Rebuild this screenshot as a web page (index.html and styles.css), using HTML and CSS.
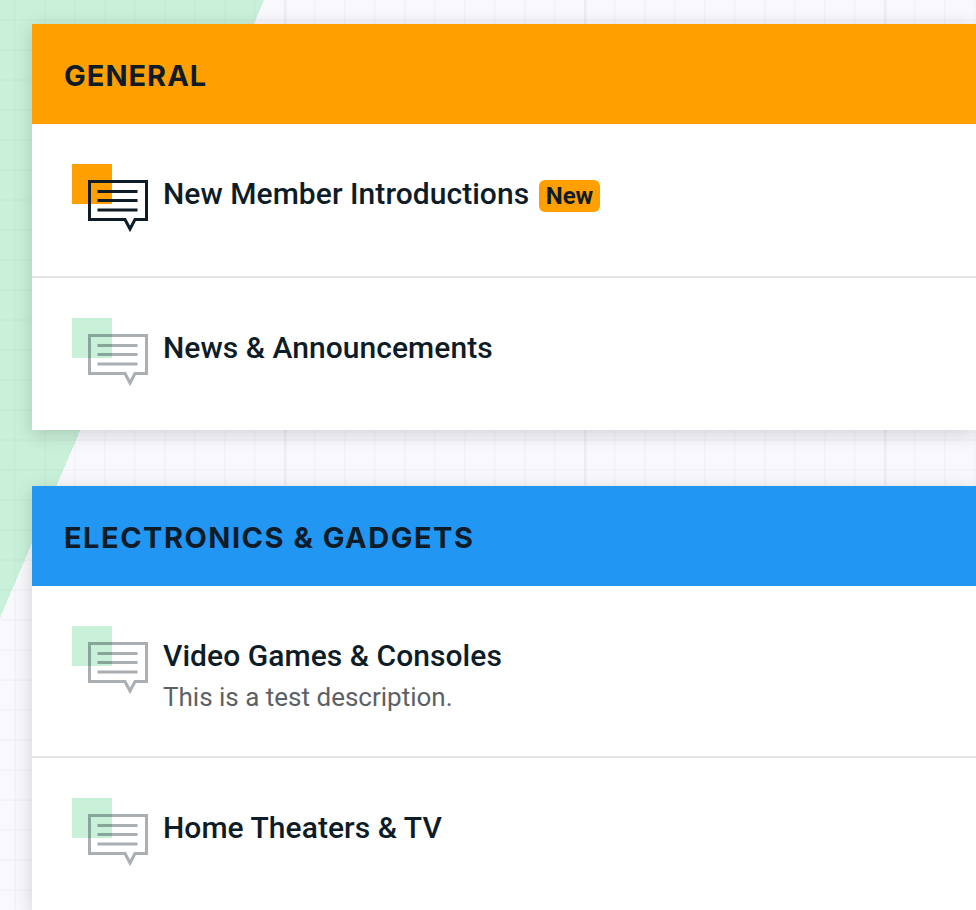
FILE: index.html
```html
<!DOCTYPE html>
<html lang="en">
<head>
    <meta charset="UTF-8">
    <meta name="viewport" content="width=device-width, initial-scale=1.0">
    <title>Forums</title>
    <link rel="stylesheet" href="styles.css">
</head>
<body>

    <svg class="sprite" width="0" height="0" aria-hidden="true">
        <symbol id="bubble" viewBox="0 0 60 52">
            <path d="M1.5 1.5H58.500V39.500H47L42 49 37 39.500H1.500Z" fill="none" stroke="currentColor" stroke-width="3"/>
            <path d="M9.500 11.500H49.500M9.500 20.500H49.500M9.500 30H49.500" fill="none" stroke="currentColor" stroke-width="3"/>
        </symbol>
    </svg>

    <div class="main">
        <section class="category">
            <h2 class="category-head general">GENERAL</h2>
            <div class="forum unread">
                <div class="forum-icon">
                    <span class="square"></span>
                    <svg class="bubble"><use href="#bubble"/></svg>
                </div>
                <div class="forum-text">
                    <h3>New Member Introductions <span class="badge">New</span></h3>
                </div>
            </div>
            <div class="forum">
                <div class="forum-icon">
                    <span class="square"></span>
                    <svg class="bubble"><use href="#bubble"/></svg>
                </div>
                <div class="forum-text">
                    <h3>News &amp; Announcements</h3>
                </div>
            </div>
        </section>

        <section class="category">
            <h2 class="category-head electronics">ELECTRONICS &amp; GADGETS</h2>
            <div class="forum">
                <div class="forum-icon">
                    <span class="square"></span>
                    <svg class="bubble"><use href="#bubble"/></svg>
                </div>
                <div class="forum-text">
                    <h3>Video Games &amp; Consoles</h3>
                    <p>This is a test description.</p>
                </div>
            </div>
            <div class="forum">
                <div class="forum-icon">
                    <span class="square"></span>
                    <svg class="bubble"><use href="#bubble"/></svg>
                </div>
                <div class="forum-text">
                    <h3>Home Theaters &amp; TV</h3>
                </div>
            </div>
        </section>
    </div>

</body>
</html>
```

FILE: styles.css
```css
html, body {
    height: 100%;
}
body {
    margin: 0;
    overflow: hidden;
    font-family: Roboto, Arial, sans-serif;
    color: #0e1c27;
    background-color: #f9f8fd;
    background-image:
        linear-gradient(to right, rgba(120, 120, 150, 0.05) 3px, transparent 3px),
        linear-gradient(to right, rgba(120, 120, 150, 0.035) 2px, transparent 2px),
        linear-gradient(to bottom, rgba(120, 120, 150, 0.035) 2px, transparent 2px),
        linear-gradient(to bottom right, #c9f0d9 50%, transparent 50%);
    background-size: 300px 100%, 30px 100%, 100% 30px, 264px 618px;
    background-position: 284px 0, 14px 0, 0 19px, 0 0;
    background-repeat: repeat, repeat, repeat, no-repeat;
}
.sprite {
    position: absolute;
}
.main {
    display: flex;
    flex-direction: column;
    gap: 56px;
    padding: 24px 0 0 32px;
}
.category {
    background-color: white;
    box-shadow: 0 4px 18px rgba(0, 0, 0, 0.16);
}
.category-head {
    margin: 0;
    height: 100px;
    box-sizing: border-box;
    padding: 3px 0 0 32px;
    display: flex;
    align-items: center;
    font-family: Inter, Arial, sans-serif;
    font-size: 29px;
    font-weight: 700;
}
.general {
    background-color: #ffa000;
    letter-spacing: 1px;
}
.electronics {
    background-color: #2196f3;
    letter-spacing: 1.5px;
}
.forum {
    display: flex;
    gap: 15px;
    padding: 40px;
}
.forum + .forum {
    border-top: 2px solid #e3e3e3;
}
.forum-icon {
    flex: none;
    display: flex;
    align-items: flex-start;
    width: 76px;
    height: 72px;
}
.square {
    flex: none;
    width: 40px;
    height: 40px;
    background-color: #c9f0d9;
}
.bubble {
    flex: none;
    width: 60px;
    height: 52px;
    margin: 16px 0 0 -24px;
    color: #0e1c27;
    opacity: 0.35;
}
.unread .square {
    background-color: #ffa000;
}
.unread .bubble {
    opacity: 1;
}
.forum-text {
    padding: 12px 0 4px;
}
.forum-text h3 {
    margin: 0;
    font-size: 30px;
    font-weight: 500;
    line-height: 36px;
    letter-spacing: 0.05px;
}
.forum-text p {
    margin: 8px 0 0;
    font-size: 26px;
    line-height: 30px;
    color: #5c6166;
}
.badge {
    display: inline-block;
    margin: 4px 0 0 2px;
    padding: 0 7px;
    font-size: 24px;
    font-weight: 700;
    line-height: 32px;
    letter-spacing: 0;
    vertical-align: top;
    background-color: #ffa000;
    border-radius: 6px;
}
```
